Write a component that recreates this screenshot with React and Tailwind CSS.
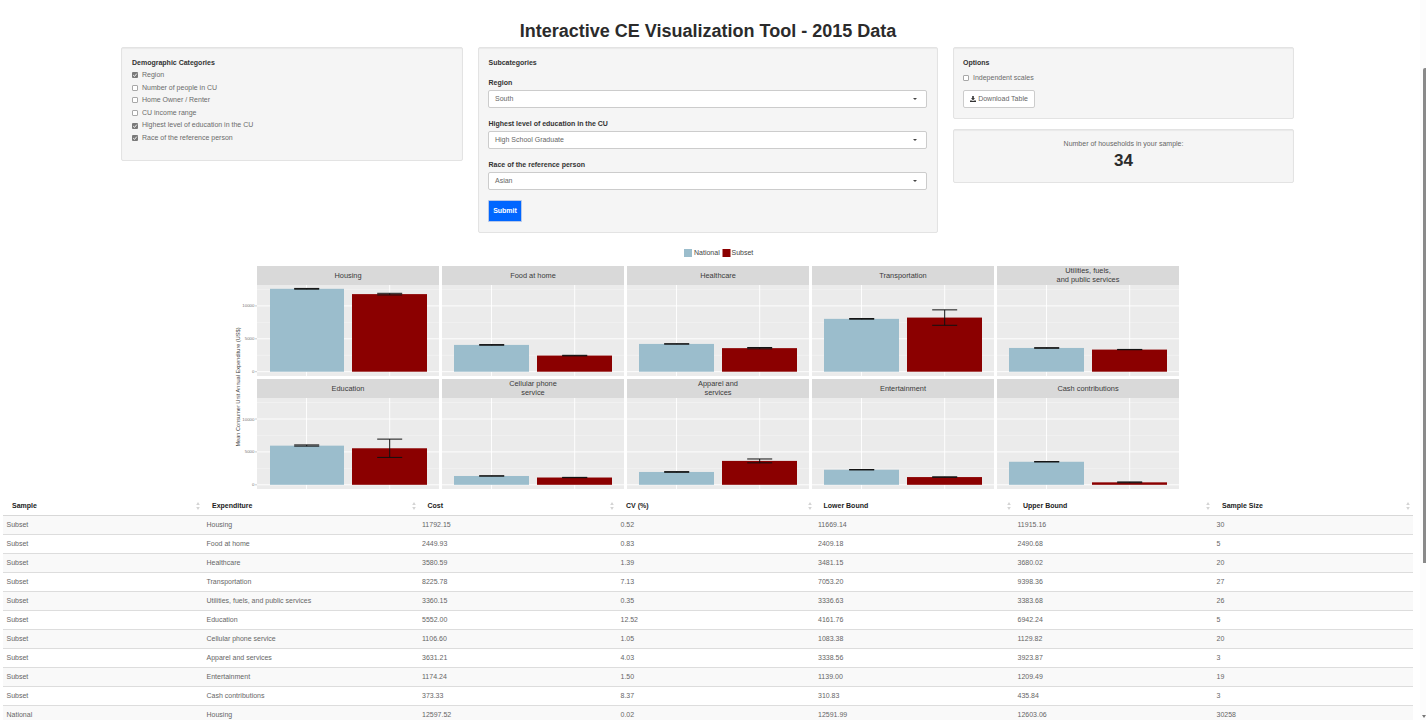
import React from "react";

const DEMOGRAPHICS = [
  { label: "Region", checked: true },
  { label: "Number of people in CU", checked: false },
  { label: "Home Owner / Renter", checked: false },
  { label: "CU income range", checked: false },
  { label: "Highest level of education in the CU", checked: true },
  { label: "Race of the reference person", checked: true },
];

const SELECTS = [
  { label: "Region", value: "South" },
  { label: "Highest level of education in the CU", value: "High School Graduate" },
  { label: "Race of the reference person", value: "Asian" },
];

// national / subset are [value, lower, upper]
const FACETS = [
  { title: ["Housing"], national: [12597, 12540, 12655], subset: [11792, 11669, 11915] },
  { title: ["Food at home"], national: [4070, 4020, 4120], subset: [2450, 2409, 2491] },
  { title: ["Healthcare"], national: [4220, 4190, 4250], subset: [3581, 3481, 3680] },
  { title: ["Transportation"], national: [8030, 7980, 8080], subset: [8226, 7053, 9398] },
  { title: ["Utilities, fuels,", "and public services"], national: [3610, 3560, 3650], subset: [3360, 3337, 3384] },
  { title: ["Education"], national: [5950, 5880, 6060], subset: [5552, 4162, 6942] },
  { title: ["Cellular phone", "service"], national: [1340, 1320, 1370], subset: [1107, 1083, 1130] },
  { title: ["Apparel and", "services"], national: [1950, 1900, 2000], subset: [3631, 3339, 3924] },
  { title: ["Entertainment"], national: [2290, 2260, 2320], subset: [1174, 1139, 1209] },
  { title: ["Cash contributions"], national: [3500, 3470, 3530], subset: [373, 311, 436] },
];

const COLUMN_X = [257, 442, 627, 812, 997];
const PANEL_W = 182;

const ROWS = [
  ["Subset", "Housing", "11792.15", "0.52", "11669.14", "11915.16", "30"],
  ["Subset", "Food at home", "2449.93", "0.83", "2409.18", "2490.68", "5"],
  ["Subset", "Healthcare", "3580.59", "1.39", "3481.15", "3680.02", "20"],
  ["Subset", "Transportation", "8225.78", "7.13", "7053.20", "9398.36", "27"],
  ["Subset", "Utilities, fuels, and public services", "3360.15", "0.35", "3336.63", "3383.68", "26"],
  ["Subset", "Education", "5552.00", "12.52", "4161.76", "6942.24", "5"],
  ["Subset", "Cellular phone service", "1106.60", "1.05", "1083.38", "1129.82", "20"],
  ["Subset", "Apparel and services", "3631.21", "4.03", "3338.56", "3923.87", "3"],
  ["Subset", "Entertainment", "1174.24", "1.50", "1139.00", "1209.49", "19"],
  ["Subset", "Cash contributions", "373.33", "8.37", "310.83", "435.84", "3"],
  ["National", "Housing", "12597.52", "0.02", "12591.99", "12603.06", "30258"],
];

const HEADERS = [
  { label: "Sample", width: "w-[200px]" },
  { label: "Expenditure", width: "w-[215.5px]" },
  { label: "Cost", width: "w-[198.5px]" },
  { label: "CV (%)", width: "w-[197.5px]" },
  { label: "Lower Bound", width: "w-[199.5px]" },
  { label: "Upper Bound", width: "w-[199px]" },
  { label: "Sample Size", width: "w-[200px]" },
];

const Panel = ({ className, children }) => (
  <div className={`rounded-[2px] border border-[#e3e3e3] bg-[#f5f5f5] shadow-[inset_0_1px_1px_rgba(0,0,0,0.05)] ${className}`}>
    {children}
  </div>
);

const CheckBox = ({ checked }) =>
  checked ? (
    <span className="flex h-[6px] w-[6px] shrink-0 items-center justify-center rounded-[1px] bg-[#7a7a7a]">
      <svg viewBox="0 0 6 6" className="h-[6px] w-[6px]">
        <path d="M1.2 3.1 2.5 4.4 4.8 1.6" fill="none" stroke="#fff" strokeWidth="0.9" />
      </svg>
    </span>
  ) : (
    <span className="h-[6px] w-[6px] shrink-0 rounded-[1px] border border-[#a8a8a8] bg-white" />
  );

const SelectBox = ({ label, value }) => (
  <div className="mb-[11px]">
    <div className="mb-[2px] h-[10px] pl-[0.5px] text-[7px] leading-[10px] font-bold text-[#333]">{label}</div>
    <div className="flex h-[18px] items-center justify-between rounded-[2px] border border-[#ccc] bg-white pr-[9px] pl-[6px] text-[7px] text-[#666]">
      <span>{value}</span>
      <span className="h-0 w-0 border-x-[2px] border-t-[2px] border-x-transparent border-t-[#444]" />
    </div>
  </div>
);

const SortIcon = () => (
  <svg viewBox="0 0 4 8" className="h-[8px] w-[4px] shrink-0">
    <path d="M2 0 3.8 3H.2zM2 8 .2 5h3.6z" fill="#d4d4d4" />
  </svg>
);

const ErrorBar = ({ cx, y0, range }) => {
  const [, lo, hi] = range;
  const top = y0 - (hi / 5000) * 32.9;
  const bottom = y0 - (lo / 5000) * 32.9;
  return (
    <g stroke="#111" strokeWidth="1">
      <line x1={cx - 12.5} x2={cx + 12.5} y1={top} y2={top} />
      <line x1={cx - 12.5} x2={cx + 12.5} y1={bottom} y2={bottom} />
      <line x1={cx} x2={cx} y1={top} y2={bottom} />
    </g>
  );
};

const Facet = ({ facet, index }) => {
  const col = index % 5;
  const row = Math.floor(index / 5);
  const x = COLUMN_X[col];
  const stripY = row === 0 ? 266 : 379;
  const panelY = stripY + 19;
  const y0 = row === 0 ? 371.7 : 484.8;
  const scale = 32.9 / 5000;
  const major = [0, 5000, 10000];
  const minor = [2500, 7500, 12500];
  const lines = facet.title;
  const natH = facet.national[0] * scale;
  const subH = facet.subset[0] * scale;
  // first column's bars sit a pixel further in than the others
  const natX = col === 0 ? 13 : 12;

  return (
    <g>
      <rect x={x} y={stripY} width={PANEL_W} height={19} fill="#d9d9d9" />
      {lines.map((line, i) => (
        <text
          key={line}
          x={x + PANEL_W / 2}
          y={stripY + (lines.length === 1 ? 12 : 7 + i * 9)}
          textAnchor="middle"
          fontSize="7.4"
          fill="#3a3a3a"
        >
          {line}
        </text>
      ))}
      <rect x={x} y={panelY} width={PANEL_W} height={91} fill="#ebebeb" />
      {minor.map((v) => (
        <line key={v} x1={x} x2={x + PANEL_W} y1={y0 - v * scale} y2={y0 - v * scale} stroke="#f5f5f5" strokeWidth="0.6" />
      ))}
      {major.map((v) => (
        <line key={v} x1={x} x2={x + PANEL_W} y1={y0 - v * scale} y2={y0 - v * scale} stroke="#fff" strokeWidth="0.9" />
      ))}
      <line x1={x + 49.5} x2={x + 49.5} y1={panelY} y2={panelY + 91} stroke="#fff" strokeWidth="0.9" />
      <line x1={x + 132.7} x2={x + 132.7} y1={panelY} y2={panelY + 91} stroke="#fff" strokeWidth="0.9" />
      <rect x={x + natX} y={y0 - natH} width={87 - natX} height={natH} fill="#9bbdcc" />
      <rect x={x + 95} y={y0 - subH} width={75} height={subH} fill="#8b0000" />
      <ErrorBar cx={x + 49.7} y0={y0} range={facet.national} />
      <ErrorBar cx={x + 132.7} y0={y0} range={facet.subset} />
      {col === 0 &&
        major.map((v) => (
          <g key={v}>
            <text x={254.5} y={y0 - v * scale + 1.5} textAnchor="end" fontSize="4.4" fill="#777">
              {v}
            </text>
            <line x1={255} x2={257} y1={y0 - v * scale} y2={y0 - v * scale} stroke="#999" strokeWidth="0.5" />
          </g>
        ))}
    </g>
  );
};

const Chart = () => (
  <svg viewBox="235 245 945 245" className="ml-[235px] block h-[245px] w-[945px]">
    <rect x={684} y={249} width={8} height={8} fill="#9bbdcc" />
    <text x={694} y={255} fontSize="7" fill="#444">National</text>
    <rect x={722.5} y={249} width={8} height={8} fill="#8b0000" />
    <text x={731.5} y={255} fontSize="7" fill="#444">Subset</text>
    {FACETS.map((facet, i) => (
      <Facet key={facet.title[0]} facet={facet} index={i} />
    ))}
    <text
      x={0}
      y={0}
      transform="translate(240 387) rotate(-90)"
      textAnchor="middle"
      fontSize="5.6"
      fill="#444"
    >
      Mean Consumer Unit Annual Expenditure (US$)
    </text>
  </svg>
);

const DataTable = () => (
  <table className="ml-[3px] w-[1410px] table-fixed border-collapse text-[7px]">
    <thead>
      <tr className="h-[19px] border-b border-[#d8d8d8]">
        {HEADERS.map((h) => (
          <th key={h.label} className={`${h.width} pt-[2px] pr-[3px] pl-[9px] text-left font-bold text-[#222]`}>
            <div className="flex items-center justify-between">
              <span>{h.label}</span>
              <SortIcon />
            </div>
          </th>
        ))}
      </tr>
    </thead>
    <tbody>
      {ROWS.map((row, i) => (
        <tr key={i} className={`h-[19px] border-b border-[#ddd] ${i % 2 === 0 ? "bg-[#f9f9f9]" : "bg-white"}`}>
          {row.map((cell, j) => (
            <td key={j} className="pt-[2px] pl-[3.5px] text-[#666]">
              {cell}
            </td>
          ))}
        </tr>
      ))}
    </tbody>
  </table>
);

export default function App() {
  return (
    <div className="relative h-[720px] overflow-hidden bg-white font-['Liberation_Sans',Arial,sans-serif]">
      <h1 className="flex h-[47px] items-center justify-center pt-[16px] pr-[10px] text-[18px] font-bold text-[#2b2b2b]">
        Interactive CE Visualization Tool - 2015 Data
      </h1>

      <div className="ml-[121px] flex h-[186px] items-start gap-[15px]">
        <Panel className="h-[114px] w-[342px] px-[10px] pt-[10px]">
          <div className="mb-[1px] h-[10px] text-[7px] leading-[10px] font-bold text-[#333]">Demographic Categories</div>
          {DEMOGRAPHICS.map((d) => (
            <div key={d.label} className="flex h-[12.6px] items-center gap-[4px] text-[7px] text-[#6b6b6b]">
              <CheckBox checked={d.checked} />
              <span>{d.label}</span>
            </div>
          ))}
        </Panel>

        <Panel className="h-[186px] w-[460px] pt-[10px] pr-[10px] pl-[9px]">
          <div className="mb-[10px] h-[10px] pl-[0.5px] text-[7px] leading-[10px] font-bold text-[#333]">Subcategories</div>
          {SELECTS.map((s) => (
            <SelectBox key={s.label} label={s.label} value={s.value} />
          ))}
          <button className="-mt-[1px] block h-[22px] w-[34px] rounded-[1px] border border-[#b8c8e8] bg-[#0066ff] text-[7px] font-bold text-white">
            Submit
          </button>
        </Panel>

        <div className="flex w-[341px] flex-col gap-[10px]">
          <Panel className="h-[72px] pt-[10px] pr-[10px] pl-[9px]">
            <div className="mb-[5px] h-[10px] text-[7px] leading-[10px] font-bold text-[#333]">Options</div>
            <div className="flex h-[10px] items-center gap-[4px] text-[7px] text-[#6b6b6b]">
              <CheckBox checked={false} />
              <span>Independent scales</span>
            </div>
            <button className="mt-[7px] flex h-[18px] w-[72px] items-center justify-center gap-[2px] rounded-[2px] border border-[#ccc] bg-white text-[7px] text-[#666]">
              <svg viewBox="0 0 6 6" className="h-[6px] w-[6px]">
                <path d="M2.2 0h1.6v2.2h1.3L3 4.2.9 2.2h1.3zM0 4.4h1.6L3 5l1.4-.6H6V6H0z" fill="#333" />
              </svg>
              <span>Download Table</span>
            </button>
          </Panel>
          <Panel className="flex h-[54px] flex-col items-center pt-[9px]">
            <div className="h-[9px] text-[7px] leading-[9px] text-[#666]">Number of households in your sample:</div>
            <div className="mt-[3px] text-[17px] leading-[20px] font-bold text-[#2b2b2b]">34</div>
          </Panel>
        </div>
      </div>

      <div className="mt-[12px]">
        <Chart />
      </div>

      <div className="mt-[6px]">
        <DataTable />
      </div>

      {/* page scrollbar */}
      <div className="absolute inset-y-0 right-0 w-[6px] bg-[#fcfcfc]">
        <div className="absolute top-[68px] right-0 h-[495px] w-[3px] rounded-tl-[2px] bg-[#8a8a8a]" />
        <div className="absolute right-0 bottom-[2px] h-0 w-0 border-x-[2px] border-t-[3px] border-x-transparent border-t-[#777]" />
      </div>
    </div>
  );
}
